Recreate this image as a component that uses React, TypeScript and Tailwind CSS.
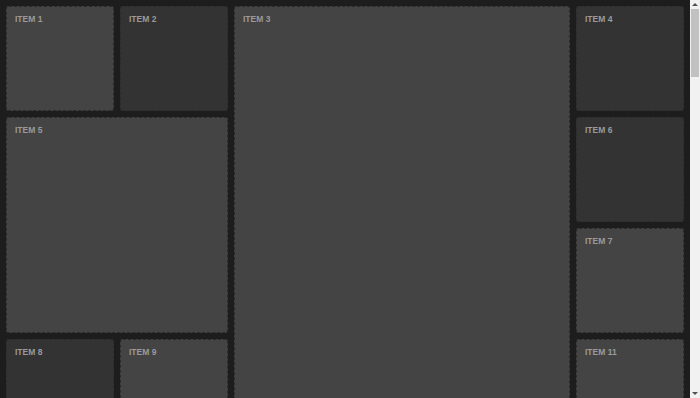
const ITEMS: { n: number; span: string }[] = [
  { n: 1, span: "" },
  { n: 2, span: "" },
  { n: 3, span: "col-span-3 row-span-4" },
  { n: 4, span: "" },
  { n: 5, span: "col-span-2 row-span-2" },
  { n: 6, span: "" },
  { n: 7, span: "" },
  { n: 8, span: "" },
  { n: 9, span: "" },
  { n: 10, span: "col-span-2 row-span-2" },
  { n: 11, span: "" },
];

function Tile({ n, span }: { n: number; span: string }) {
  const light = n % 2 === 1;
  return (
    <div
      className={`${span} ${
        light ? "bg-[#444444]" : "bg-[#333333]"
      } rounded-[3px] border border-dashed border-[#2c2c2c] px-[8px] pt-[6px]`}
    >
      <span className="block text-[8.5px] font-bold uppercase leading-[12px] text-[#9a9a9a]">
        Item {n}
      </span>
    </div>
  );
}

// static stand-in for the page scrollbar
function Scrollbar() {
  return (
    <div className="flex w-[10px] shrink-0 flex-col items-center bg-[#f1f1f1]">
      <div className="mt-[3px] h-0 w-0 border-x-[3px] border-b-[3px] border-x-transparent border-b-[#505050]" />
      <div className="mt-[3px] h-[68px] w-[8px] bg-[#c1c1c1]" />
      <div className="flex-1" />
      <div className="mb-[3px] h-0 w-0 border-x-[3px] border-t-[3px] border-x-transparent border-t-[#505050]" />
    </div>
  );
}

export default function App() {
  return (
    <div
      className="flex h-[398px] overflow-hidden bg-[#1d1d1d]"
      style={{ fontFamily: '"Liberation Sans", Arial, sans-serif' }}
    >
      <div className="min-w-0 flex-1">
        <div className="grid grid-flow-dense auto-rows-[105px] grid-cols-6 gap-[6px] p-[6px]">
          {ITEMS.map((item) => (
            <Tile key={item.n} n={item.n} span={item.span} />
          ))}
        </div>
      </div>
      <Scrollbar />
    </div>
  );
}
